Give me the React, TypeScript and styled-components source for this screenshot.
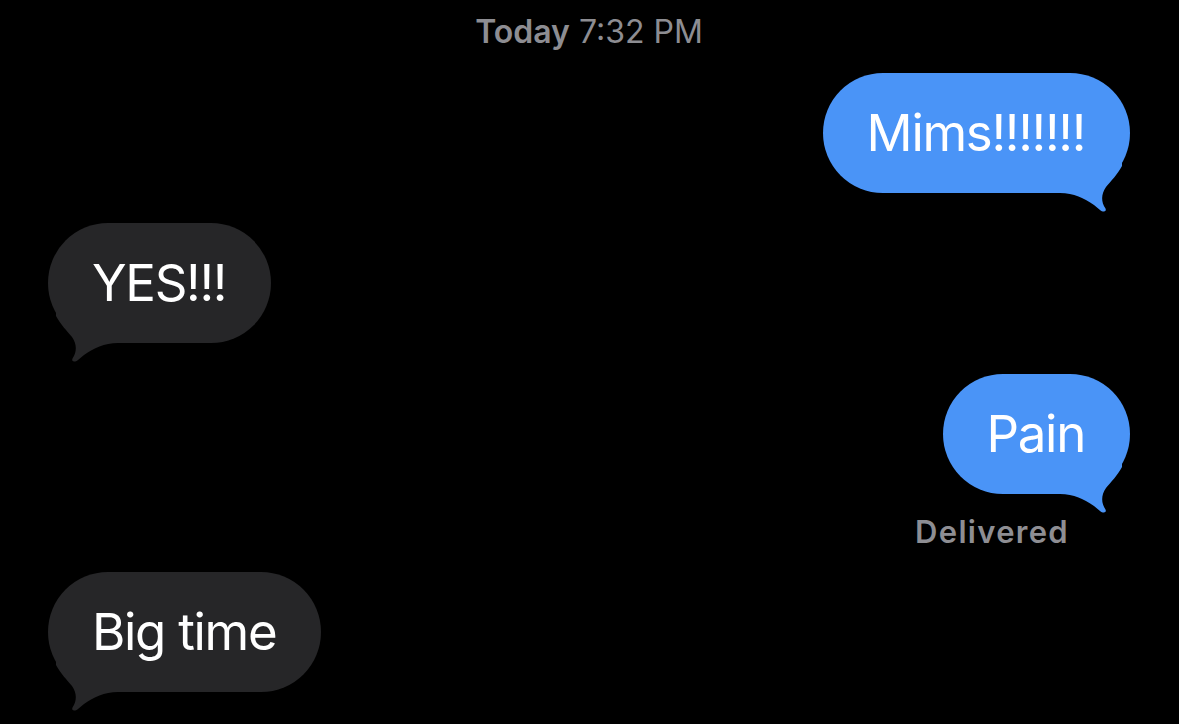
import React from 'react';
import styled, { createGlobalStyle } from 'styled-components';

const GlobalStyle = createGlobalStyle`
  html, body {
    margin: 0;
    padding: 0;
    background: #000;
  }
  body {
    font-family: Inter, "Noto Sans", sans-serif;
    -webkit-font-smoothing: antialiased;
  }
`

const BLUE = '#4a94f7';
const GRAY = '#262628';

type Side = 'left' | 'right';

const Screen = styled.div`
  width: 1179px;
  height: 724px;
  overflow: hidden;
  background: #000;
  display: flex;
  flex-direction: column;
  padding: 13px 49px 0 48px;
  box-sizing: border-box;
`

const Stamp = styled.div`
  text-align: center;
  font-size: 32px;
  line-height: 38px;
  color: #8d8d92;
  margin-bottom: 22px;

  b {
    font-weight: 600;
  }
`

const Row = styled.div<{ $side: Side; $gap: number }>`
  display: flex;
  justify-content: ${p => (p.$side === 'right' ? 'flex-end' : 'flex-start')};
  margin-bottom: ${p => p.$gap}px;
`

const Bubble = styled.div<{ $side: Side }>`
  position: relative;
  background: ${p => (p.$side === 'right' ? BLUE : GRAY)};
  color: #fff;
  font-size: 51px;
  line-height: 60px;
  letter-spacing: -1.3px;
  padding: 30px 45px 30px 44px;
  border-radius: 60px;
  white-space: nowrap;
`

const Tail = styled.svg<{ $side: Side }>`
  position: absolute;
  bottom: -21px;
  width: 72px;
  height: 54px;
  ${p => (p.$side === 'right' ? 'right: -2px;' : 'left: -2px; transform: scaleX(-1);')}
`

const Status = styled.div`
  align-self: flex-end;
  margin-right: 61px;
  font-size: 31px;
  line-height: 36px;
  font-weight: 600;
  letter-spacing: 1.3px;
  color: #8e8e93;
  margin-top: -11px;
  margin-bottom: 22px;
`

const Message = ({ side, text, gap }: { side: Side; text: string; gap: number }) => (
  <Row $side={side} $gap={gap}>
    <Bubble $side={side}>
      {text}
      <Tail $side={side} viewBox="0 0 72 54">
        <path
          fill={side === 'right' ? BLUE : GRAY}
          d="M0,0 L0,33 C14,33 24,38 34,45 L40,50 C43,52.5 47,52 45.5,48.5 C41,42 41,34 46,27 C51,21 57,15 62,6 L62,0 Z"
        />
      </Tail>
    </Bubble>
  </Row>
);

export default function App() {
  return (
    <Screen>
      <GlobalStyle />
      <Stamp>
        <b>Today</b> 7:32 PM
      </Stamp>
      <Message side="right" text="Mims!!!!!!!" gap={30} />
      <Message side="left" text="YES!!!" gap={31} />
      <Message side="right" text="Pain" gap={31} />
      <Status>Delivered</Status>
      <Message side="left" text="Big time" gap={0} />
    </Screen>
  );
}
